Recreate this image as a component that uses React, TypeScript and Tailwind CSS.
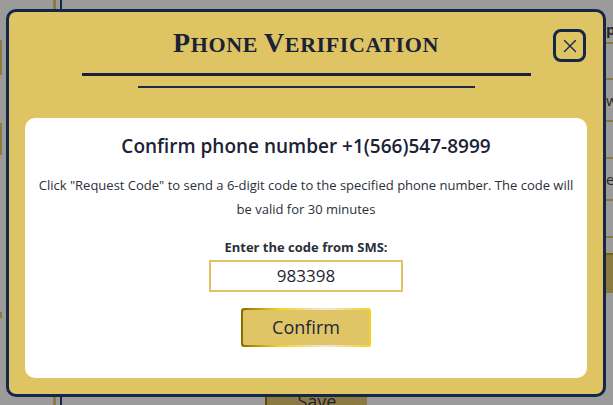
import React from "react";

export default function App() {
  return (
    <div className="relative w-[613px] h-[405px] overflow-hidden bg-[#9b9b9b]" style={{ fontFamily: '"Open Sans", sans-serif' }}>
      {/* dimmed page behind the modal */}
      <div className="absolute left-[53px] top-0 h-full w-[3px] bg-[#8b7b40]" />
      <div className="absolute left-[60px] top-0 h-full w-[2px] bg-[#14264a]" />
      <div className="absolute left-0 top-[40px] h-[35px] w-[2px] bg-[#8b7b40]" />
      <div className="absolute left-0 top-[123px] h-[32px] w-[2px] bg-[#8b7b40]" />
      <div className="absolute left-0 top-[312px] h-[6px] w-[2px] bg-[#8b7b40]" />
      <div className="absolute left-[606px] top-0 w-[20px] flex flex-col text-[15px] text-[#2a2a2a]">
        <div className="h-[42px] pt-[20px] leading-[18px] font-bold">p</div>
        <div className="h-[2px] bg-[#8b7b40]" />
        <div className="h-[34px]" />
        <div className="h-[2px] bg-[#8b7b40]" />
        <div className="h-[40px] leading-[40px]">w</div>
        <div className="h-[2px] bg-[#8b7b40]" />
        <div className="h-[35px]" />
        <div className="h-[2px] bg-[#8b7b40]" />
        <div className="h-[40px] leading-[40px]">e</div>
        <div className="h-[2px] bg-[#8b7b40]" />
        <div className="h-[35px]" />
        <div className="h-[2px] bg-[#8b7b40]" />
        <div className="h-[15px]" />
        <div className="h-[40px] bg-[#8a7a3e] border-t-2 border-[#7a6410]" />
      </div>
      <div className="absolute left-[265px] top-[381px] w-[102px] h-[40px] bg-[#8a7a42] border-l-2 border-[#5f4b08] flex items-center justify-center text-[18px] text-[#1b2235]">
        Save
      </div>

      {/* modal */}
      <div className="absolute left-[6px] top-[9px] w-[600px] h-[388px] rounded-[10px] border-[3px] border-[#14264a] bg-[#dec463] px-4 flex flex-col items-center">
        <h2
          className="mt-[15px] h-[32px] flex items-baseline font-bold text-[#1b2235] tracking-[0.6px] uppercase leading-[32px]"
          style={{ fontFamily: '"Liberation Serif", "DejaVu Serif", serif' }}
        >
          <span className="text-[28px]">P</span>
          <span className="text-[22px]">hone&nbsp;</span>
          <span className="text-[28px]">V</span>
          <span className="text-[22px]">erification</span>
        </h2>
        <div className="mt-[14px] h-[3px] w-[449px] bg-[#1b2235]" />
        <div className="mt-[10px] h-[2px] w-[337px] bg-[#1b2a4a]" />

        <button className="absolute left-[544px] top-[17px] w-[33px] h-[33px] rounded-[8px] border-[3px] border-[#14264a] flex items-center justify-center">
          <svg width="14" height="14" viewBox="0 0 14 14" fill="none" stroke="#14264a" strokeWidth="1.4" strokeLinecap="round">
            <path d="M1.5 1.5 L12.5 12.5 M12.5 1.5 L1.5 12.5" />
          </svg>
        </button>

        <div className="mt-[30px] w-full h-[260px] rounded-[10px] bg-white flex flex-col items-center px-3 pt-[14px]">
          <h3 className="text-[19px] leading-[28px] font-semibold text-[#1b2235]">
            Confirm phone number +1(566)547-8999
          </h3>
          <p className="mt-[13px] text-[13px] leading-[24px] text-[#2b2f3a] text-center">
            Click "Request Code" to send a 6-digit code to the specified phone number. The code will be valid for 30 minutes
          </p>
          <label className="mt-[16px] text-[13px] leading-[20px] font-bold text-[#2b2f3a]">
            Enter the code from SMS:
          </label>
          <div className="mt-[3px] w-[194px] h-[32px] border-2 border-[#dec463] flex items-center justify-center text-[17px] text-[#1f2433]">
            983398
          </div>
          <div className="mt-[16px] w-[130px] h-[39px] rounded-[3px] p-[2px] bg-[linear-gradient(90deg,#8a6a00_0%,#f3d21a_28%,#f0e6de_65%,#f3d21a_100%)]">
            <div className="w-full h-full rounded-[2px] bg-[#dfc566] flex items-center justify-center text-[18px] font-medium text-[#1b2640]">
              Confirm
            </div>
          </div>
        </div>
      </div>
    </div>
  );
}
